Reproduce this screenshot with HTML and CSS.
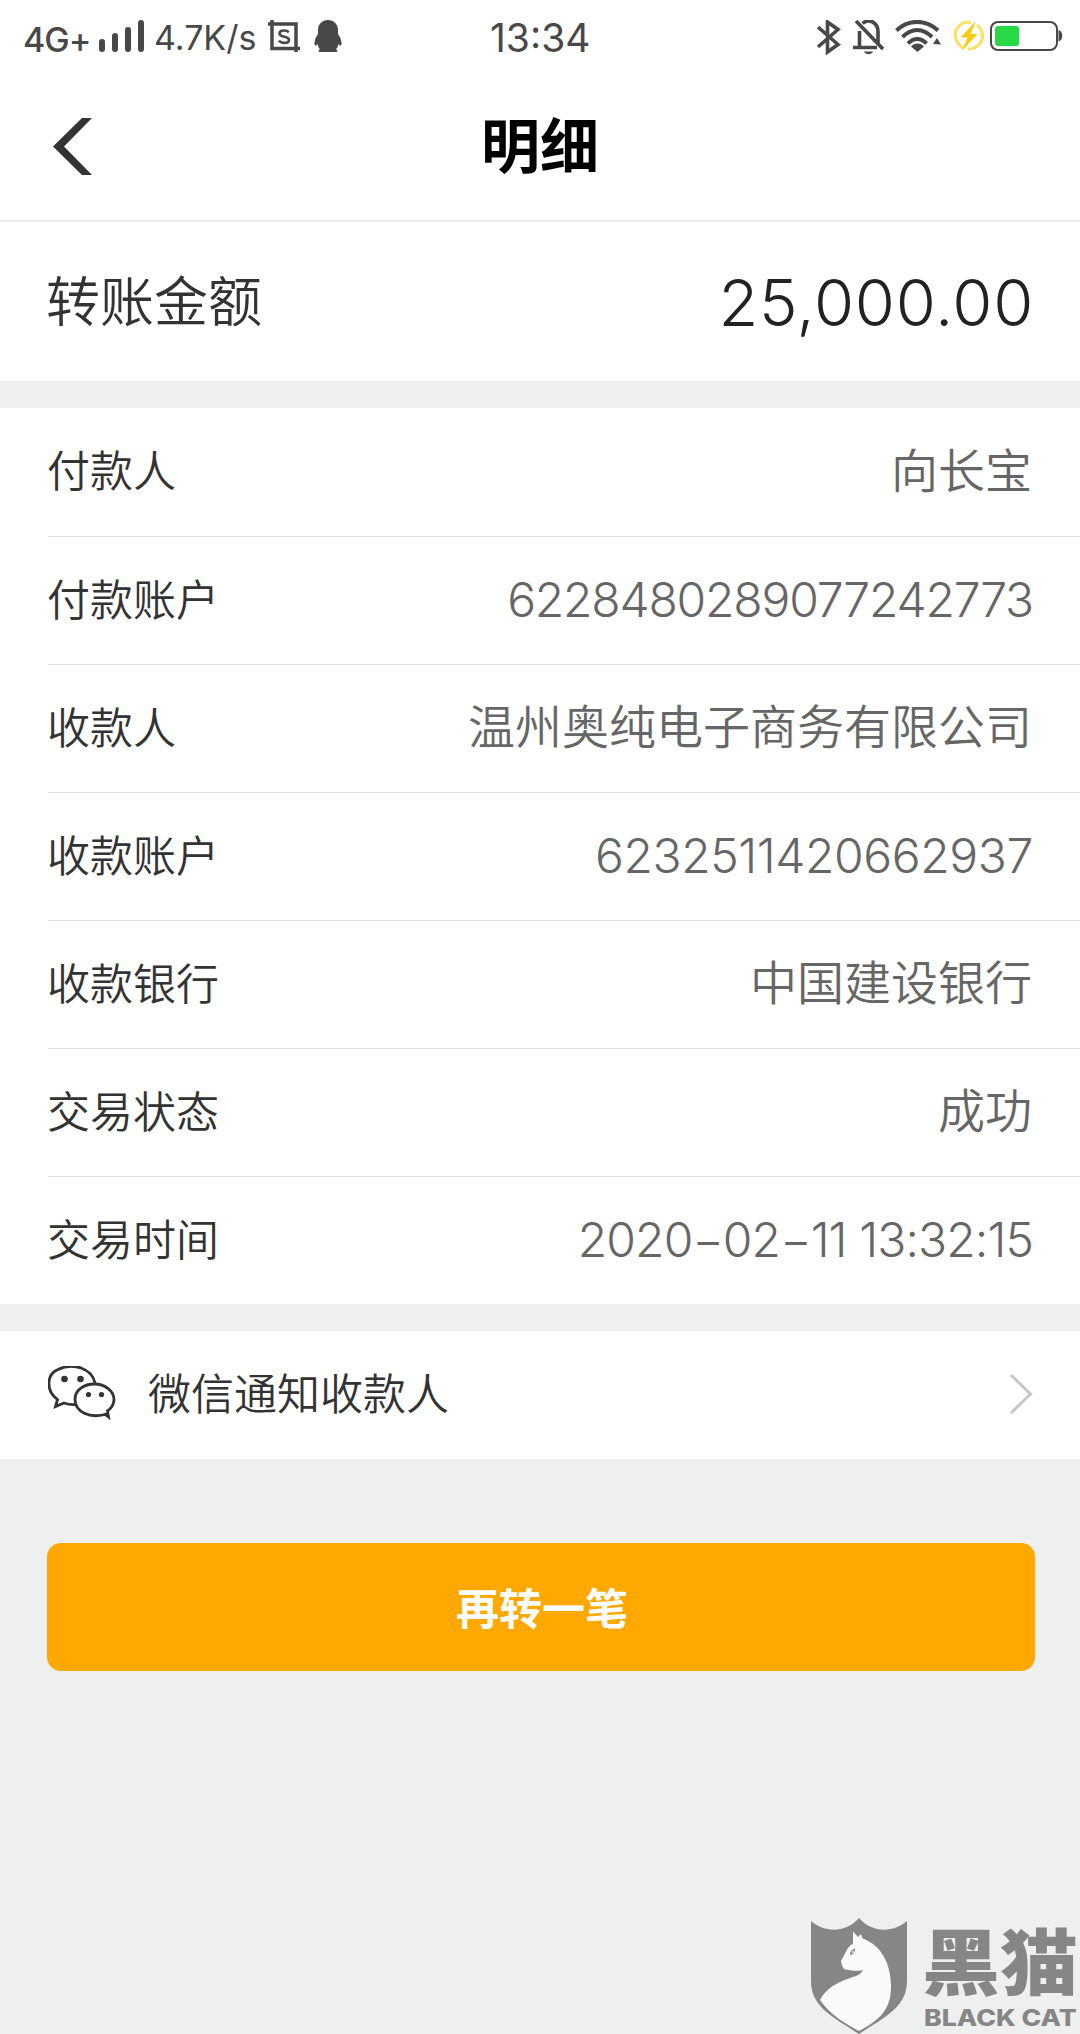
FILE: index.html
```html
<!DOCTYPE html>
<html lang="zh-CN">
<head>
  <meta charset="UTF-8" />
  <meta name="viewport" content="width=device-width, initial-scale=1.0"/>
  <title>明细</title>
  <link rel="stylesheet" href="styles.css">
</head>
<body>

  <div class="status">
    <div class="status-left">
      <span class="network">4G+</span>
      <svg class="signal" width="46" height="34" viewBox="0 0 46 34">
        <path d="M3 22v7M16 16v13M29 10v19M42 3v26" stroke="#484848" stroke-width="6" stroke-linecap="round"/>
      </svg>
      <span class="speed">4.7K/s</span>
      <svg class="shot" width="32" height="34" viewBox="0 0 32 34" fill="none" stroke="#484848">
        <path d="M4 0v28.500h28M0 4h28v28" stroke-width="3.500"/>
        <path d="M20.500 12.500c-1-2.500-9-3-9 1 0 4.500 9.500 2 9.500 6.500 0 4-8.500 3.500-10 .5" stroke-width="2.600"/>
      </svg>
      <svg class="qq" width="28" height="34" viewBox="0 0 28 34" fill="#484848">
        <path d="M14 0C8 0 4 4.500 4 10v4C1.500 17 .5 21 .5 24c0 2 1 2 3 0 .5 2.500 1.500 4 2.500 5.500-2.500.8-2 2.500 1 2.500h14c3 0 3.500-1.700 1-2.500 1-1.500 2-3 2.500-5.500 2 2 3 2 3 0 0-3-1-7-3.500-10v-4C24 4.500 20 0 14 0z"/>
      </svg>
    </div>
    <span class="clock">13:34</span>
    <div class="status-right">
      <svg class="bluetooth" width="24" height="36" viewBox="0 0 24 36" fill="none" stroke="#484848" stroke-width="3.600">
        <path d="M1 7l20 17.500-10.500 7.500v-30L21 9.500 1 27"/>
      </svg>
      <svg class="bell" width="32" height="36" viewBox="0 0 32 36" fill="none" stroke="#484848" stroke-width="3.600">
        <path d="M6.500 11v16M9.500 3.500c7-6 15.500-.5 15.500 8V23M0 27.500h24M3 1l27 28"/>
        <path d="M11 31.500h9c-1.500 3.500-7.500 3.500-9 0z" fill="#484848" stroke="none"/>
      </svg>
      <svg class="wifi" width="46" height="34" viewBox="0 0 46 34" fill="none" stroke="#484848" stroke-width="4">
        <path d="M1.500 10.500C13-1 31-1 43 10.500M7.500 17c9-9.500 20.500-9.500 29.500 0M13 23.500c5.500-6 13-6 18.500 0"/>
        <path d="M16 26.500c3.500-4 9.500-4 13 0l-6.500 5.500zM38 24l4-6 4 6.500z" fill="#484848" stroke="none"/>
      </svg>
      <svg class="bolt" width="32" height="32" viewBox="0 0 32 32">
        <path d="M18 2.500C8 .5 1 9 2.500 17c.8 5 4 9 8 11M24 5c6 5 7.500 13 2.500 19-3.500 4-7 5-11.500 5" fill="none" stroke="#fbe06a" stroke-width="3.200"/>
        <path d="M23 1L7.500 17.500h7L9 31l15.500-17h-7z" fill="#f8cb17"/>
      </svg>
      <svg class="battery" width="73" height="32" viewBox="0 0 73 32">
        <rect x="1" y="2" width="66" height="28" rx="7" fill="#fff" stroke="#484848" stroke-width="2"/>
        <rect x="5" y="6" width="24" height="20" rx="3" fill="#27d847"/>
        <path d="M68.500 10c5 1 5 10.500 0 11.500z" fill="#484848"/>
      </svg>
    </div>
  </div>

  <header class="nav">
    <svg class="back" width="40" height="60" viewBox="0 0 40 60">
      <path d="M30 1h10L12 29.500 40 58H30L1 29.500z" fill="#333"/>
    </svg>
    <h1>明细</h1>
  </header>

  <section class="amount">
    <span class="amount-label">转账金额</span>
    <span class="amount-value">25,000.00</span>
  </section>

  <section class="details">
    <div class="row"><span class="label">付款人</span><span class="value">向长宝</span></div>
    <div class="row"><span class="label">付款账户</span><span class="value num">6228480289077242773</span></div>
    <div class="row"><span class="label">收款人</span><span class="value">温州奥纯电子商务有限公司</span></div>
    <div class="row"><span class="label">收款账户</span><span class="value num payee">6232511420662937</span></div>
    <div class="row"><span class="label">收款银行</span><span class="value">中国建设银行</span></div>
    <div class="row"><span class="label">交易状态</span><span class="value">成功</span></div>
    <div class="row"><span class="label">交易时间</span><span class="value num time">2020−02−11 13:32:15</span></div>
  </section>

  <section class="notify">
    <svg class="wechat" width="68" height="54" viewBox="0 0 68 54" fill="none" stroke="#333" stroke-width="2.800">
      <path d="M27 38.500c-5 .5-8-.5-11-1.500L7.500 40.500l2-7C-3 24-1 8 10 3.500c15-7.500 34-1 37 13.500"/>
      <path d="M60 47.500C41 54 27 45 27 33.500 27 24 36 18 46.500 18S66 25 66 33.500c0 5-3 9-6.500 11.500l1 6-4-3"/>
      <circle cx="16.500" cy="13" r="3.300" fill="#333" stroke="none"/>
      <circle cx="32.500" cy="13" r="3.300" fill="#333" stroke="none"/>
      <circle cx="40.500" cy="28.500" r="2.600" fill="#333" stroke="none"/>
      <circle cx="53.500" cy="28.500" r="2.600" fill="#333" stroke="none"/>
    </svg>
    <span class="notify-text">微信通知收款人</span>
    <svg class="chevron" width="24" height="42" viewBox="0 0 24 42">
      <path d="M2 3l19.500 19L2 41" fill="none" stroke="#c7c7c7" stroke-width="3"/>
    </svg>
  </section>

  <button class="again">再转一笔</button>

  <div class="watermark">
    <svg class="shield" width="98" height="116" viewBox="0 0 98 116">
      <path d="M1 3c14 12 35 12 48-3 13 15 34 15 48 3v60c0 25-20 35-48 53C21 98 1 88 1 63z" fill="#868686"/>
      <path d="M43 13.500l5 5.500 3-3 1.500 4.500C71 27 81 45 81 69c0 22-11 33-32 44-13-7-29-16-39-31 8-15 24-20 36-24 4-1.500 6-4 7-6-7 2-13 0-18-.5-2-1-3.500-5-4-9 4-5 5-13 12-17z" fill="#fafafa"/>
      <path d="M40 37c0-4 3-6 5-6.500.5 3-1.500 6-5 6.500z" fill="#868686"/>
      <circle cx="43" cy="34" r="1" fill="#fafafa"/>
    </svg>
    <div class="brand">
      <span class="brand-cn">黑猫</span>
      <span class="brand-en">BLACK CAT</span>
    </div>
  </div>

</body>
</html>
```
FILE: styles.css
```css
* {
  box-sizing: border-box;
}
body {
  margin: 0;
  height: 2034px;
  position: relative;
  overflow: hidden;
  background: #eef0ef;
  color: #333;
  font-family: Inter, "Noto Sans CJK SC", sans-serif;
}
svg {
  display: block;
  flex: none;
}
/* status bar */
.status {
  height: 73px;
  padding: 0 17px 0 23px;
  display: grid;
  grid-template-columns: 1fr 106px 1fr;
  background: #fff;
  color: #484848;
}
.status-left,
.status-right {
  display: flex;
  align-items: flex-start;
  padding-top: 20px;
  white-space: nowrap;
}
.status-right {
  justify-content: flex-end;
}
.network {
  width: 76px;
  font-size: 34px;
  font-weight: 500;
  line-height: 39px;
  letter-spacing: -1px;
}
.speed {
  width: 104px;
  margin-left: 9px;
  font-size: 34px;
  line-height: 35px;
}
.shot {
  margin-left: 10px;
}
.qq {
  margin-left: 14px;
}
.clock {
  font-size: 39px;
  line-height: 75px;
}
.bell {
  margin-left: 12px;
}
.wifi {
  margin-left: 10px;
}
.bolt {
  margin-left: 12px;
}
.battery {
  margin-left: 5px;
}
/* title bar */
.nav {
  height: 149px;
  padding: 0 52px;
  display: grid;
  grid-template-columns: 1fr auto 1fr;
  align-items: center;
  background: #fff;
  border-bottom: 2px solid #ebebeb;
}
.nav h1 {
  margin: 0;
  color: #000;
  font-size: 59px;
  font-weight: 600;
  line-height: 60px;
}
.amount {
  height: 159px;
  padding: 0 46px 0 46px;
  display: flex;
  align-items: center;
  justify-content: space-between;
  background: #fff;
}
.amount-label {
  padding-bottom: 6px;
  font-size: 54px;
  font-weight: 350;
}
.amount-value {
  padding-top: 2px;
  color: #222;
  font-size: 65px;
  font-weight: 320;
  letter-spacing: 0.7px;
}
/* transfer details */
.details {
  margin-top: 27px;
  padding-left: 48px;
  background: #fff;
}
.row {
  height: 128px;
  padding-right: 48px;
  display: flex;
  align-items: center;
  justify-content: space-between;
}
.row + .row {
  border-top: 1px solid #e2e2e2;
}
.label {
  margin-left: -1px;
  padding-bottom: 8px;
  font-size: 43px;
  font-weight: 350;
}
.value {
  padding-bottom: 10px;
  color: #666;
  font-size: 47px;
  font-weight: 350;
}
.num {
  padding-bottom: 2px;
  margin-right: -1px;
  font-size: 48px;
  letter-spacing: -1.2px;
}
.payee {
  letter-spacing: -0.4px;
}
.time {
  letter-spacing: -0.9px;
}
.notify {
  height: 128px;
  margin-top: 27px;
  padding: 0 47px 4px 48px;
  display: flex;
  align-items: center;
  background: #fff;
}
.notify-text {
  flex: 1;
  margin-left: 32px;
  padding-bottom: 4px;
  font-size: 43px;
  font-weight: 350;
}
.again {
  display: block;
  width: 988px;
  height: 128px;
  margin: 84px 0 0 47px;
  padding: 0 0 2px 2px;
  border: 0;
  border-radius: 14px;
  background: #ffa900;
  color: #fff;
  font-family: inherit;
  font-size: 43px;
  font-weight: 600;
}
/* corner stamp, sits over the page */
.watermark {
  position: absolute;
  right: 0;
  bottom: 0;
  display: flex;
  width: 270px;
  height: 116px;
  color: #868686;
}
.brand {
  margin-left: 14px;
  white-space: nowrap;
}
.brand-cn {
  display: block;
  height: 84px;
  padding-top: 4px;
  font-size: 78px;
  font-weight: 900;
  line-height: 84px;
  transform: scaleY(0.92);
}
.brand-en {
  display: block;
  width: 132px;
  margin: 4px 0 0 2px;
  font-size: 23px;
  font-weight: 800;
  line-height: 24px;
  transform: scaleX(1.16);
  transform-origin: left;
}
```
